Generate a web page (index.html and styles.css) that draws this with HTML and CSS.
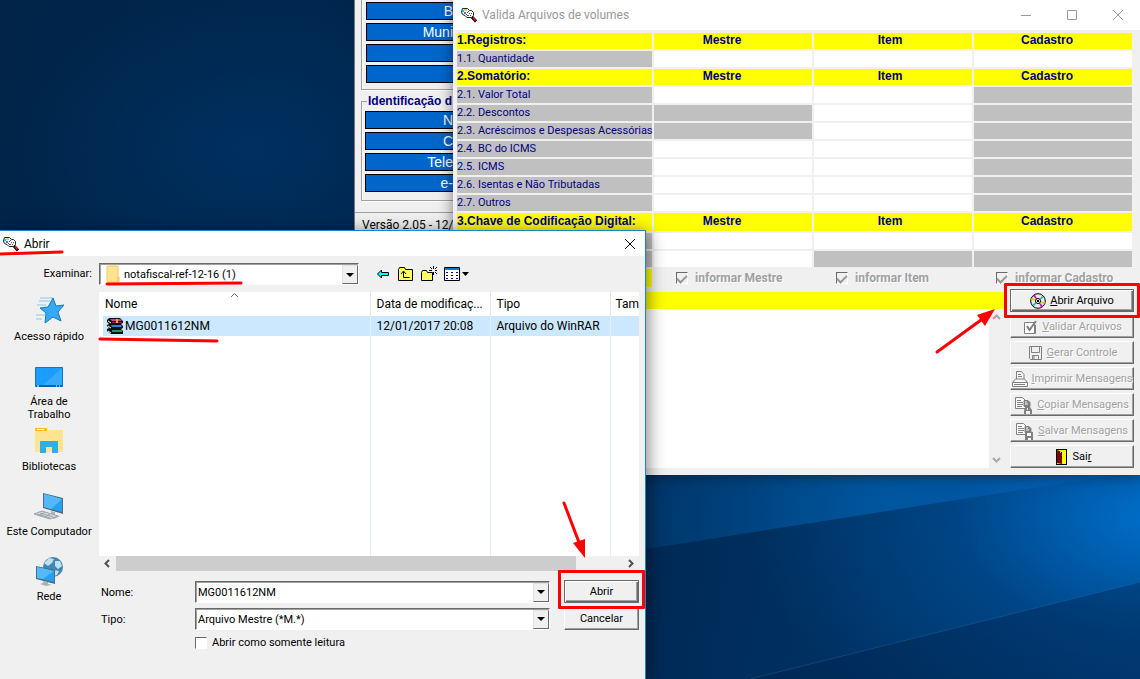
FILE: index.html
```
<!DOCTYPE html>
<html lang="pt-BR">
<head>
<meta charset="utf-8">
<title>Valida Arquivos de volumes</title>
<link rel="stylesheet" href="styles.css">
</head>
<body>
<svg class="defs" aria-hidden="true">
  <symbol id="app-icon" viewBox="0 0 16 16">
    <path d="M1.500 1.500h5l2 2h2l2 2v3l-2 2H6l-2-2-2.500-1-1-2.500z" fill="#f2f6f6" stroke="#222"/>
    <path d="M1 3h2v2H1z" fill="#0cd"/><path d="M3 2h3v2H3z" fill="#c8e060"/><path d="M3 5h2v2H3z" fill="#66d"/>
    <path d="M6 5h1v1H6zM8 6h1v1H8zM6 8h2v1H6zM9 8h1v1H9zM7 4h1v1H7zM10 6h1v1h-1zM5 7h1v1H5z" fill="#555"/>
    <path d="M11 10l4 4.500" stroke="#000" stroke-width="3"/>
    <path d="M12 10.500l2.500 3" stroke="#e22" stroke-width="1.500"/>
  </symbol>
  <symbol id="pages" viewBox="0 0 18 17">
    <path d="M.5.500h7l3 3v8H.500zM2 3.500h4M2 5.500h6M2 7.500h6M2 9.500h5" fill="#fff" stroke="#808080"/>
    <path d="M9 3.500h4l2 2v4H9z" fill="#808080" stroke="#808080"/>
    <path d="M10 5h2M10 7h3" stroke="#fff"/>
  </symbol>
</svg>
<main class="desktop">
  <svg class="wallpaper" viewBox="0 0 1140 679" preserveAspectRatio="none" aria-hidden="true">
    <defs>
      <linearGradient id="ray" x1="0" x2="1"><stop offset="0" stop-color="#0064b4" stop-opacity=".2"/><stop offset=".5" stop-color="#0064b4" stop-opacity=".65"/><stop offset="1" stop-color="#0070d0" stop-opacity=".2"/></linearGradient>
    </defs>
    <path d="M640 470h500v1L640 550z" fill="url(#ray)"/>
    <path d="M750 679l390-97v97z" fill="#002048" fill-opacity=".35"/>
    <path d="M750 679l390-97" stroke="#2a7cc0" stroke-opacity=".3"/>
  </svg>

  <section class="window back-window">
    <div class="group group-top">
      <div class="field-label">B</div>
      <div class="field-label">Muni</div>
      <div class="field-label"></div>
      <div class="field-label"></div>
    </div>
    <fieldset class="group group-id">
      <legend>Identificação d</legend>
      <div class="field-label">N</div>
      <div class="field-label">C</div>
      <div class="field-label">Tele</div>
      <div class="field-label">e-</div>
    </fieldset>
    <div class="status">Versão 2.05 - 12/0</div>
  </section>

  <section class="window valid-window">
    <header class="valid-title">
      <svg class="icon16"><use href="#app-icon"/></svg>
      <h1>Valida Arquivos de volumes</h1>
      <div class="controls">
        <button aria-label="Minimizar"><svg class="icon12" viewBox="0 0 12 12"><path d="M1 6.500h10"/></svg></button>
        <button aria-label="Maximizar"><svg class="icon12" viewBox="0 0 12 12"><path d="M1.500 1.500h9v9h-9z"/></svg></button>
        <button aria-label="Fechar"><svg class="icon12" viewBox="0 0 12 12"><path d="M1 1l10 10M11 1L1 11"/></svg></button>
      </div>
    </header>

    <table class="totals">
      <colgroup><col class="c-name"><col><col><col></colgroup>
      <tr class="head"><th>1.Registros:</th><th>Mestre</th><th>Item</th><th>Cadastro</th></tr>
      <tr><td class="off">1.1. Quantidade</td><td></td><td></td><td></td></tr>
      <tr class="head"><th>2.Somatório:</th><th>Mestre</th><th>Item</th><th>Cadastro</th></tr>
      <tr><td class="off">2.1. Valor Total</td><td></td><td></td><td class="off"></td></tr>
      <tr><td class="off">2.2. Descontos</td><td class="off"></td><td></td><td class="off"></td></tr>
      <tr><td class="off">2.3. Acréscimos e Despesas Acessórias</td><td class="off"></td><td></td><td class="off"></td></tr>
      <tr><td class="off">2.4. BC do ICMS</td><td></td><td></td><td class="off"></td></tr>
      <tr><td class="off">2.5. ICMS</td><td></td><td></td><td class="off"></td></tr>
      <tr><td class="off">2.6. Isentas e Não Tributadas</td><td></td><td></td><td class="off"></td></tr>
      <tr><td class="off">2.7. Outros</td><td></td><td></td><td class="off"></td></tr>
      <tr class="head tall"><th>3.Chave de Codificação Digital:</th><th>Mestre</th><th>Item</th><th>Cadastro</th></tr>
      <tr><td class="off"></td><td></td><td></td><td></td></tr>
      <tr><td class="off"></td><td></td><td class="off"></td><td class="off"></td></tr>
      <tr class="checks">
        <td class="mark"></td>
        <td><label><input type="checkbox" checked disabled>informar Mestre</label></td>
        <td><label><input type="checkbox" checked disabled>informar Item</label></td>
        <td><label><input type="checkbox" checked disabled>informar Cadastro</label></td>
      </tr>
    </table>

    <div class="lower">
      <div class="messages">
        <div class="bar"></div>
        <div class="log">
          <textarea aria-label="Mensagens" readonly></textarea>
          <div class="vscroll">
            <svg class="chev" viewBox="0 0 9 6"><path d="M1 5l3.500-3.500L8 5"/></svg>
            <svg class="chev" viewBox="0 0 9 6"><path d="M1 1l3.500 3.500L8 1"/></svg>
          </div>
        </div>
      </div>
      <div class="actions">
        <div class="marked">
          <button class="btn default">
            <svg class="icon16" viewBox="0 0 16 16"><circle cx="8" cy="8" r="7.300" fill="#e8e8e8" stroke="#000"/><path d="M8 8L3 3l2-1.500zM8 8l5 5-2 1.500z" fill="#d0d"/><path d="M8 8L1 7l1-2.500zM8 8l7 1-1 2.500z" fill="#cd0"/><path d="M8 8l4-5 1.500 1.500zM8 8l-4 5-1.500-1.500z" fill="#0bb"/><circle cx="8" cy="8" r="2.500" fill="#fff" stroke="#000"/><path d="M7 7h2v2H7z"/></svg>
            <span><u>A</u>brir Arquivo</span>
          </button>
          <svg class="arrow-left" viewBox="0 0 64 50"><path d="M4 46L48 14" class="shaft"/><path d="M62 3L52 20 44 9z" class="tip"/></svg>
        </div>
        <button class="btn" disabled>
          <svg class="icon16 gray" viewBox="0 0 16 16"><path d="M2.500 3.500h10v11h-10z" fill="#fff"/><path d="M4 14.500h9.500V6" fill="none"/><path d="M5 7l2.500 4L14 2" fill="none" stroke-width="2"/></svg>
          <span><u>V</u>alidar Arquivos</span>
        </button>
        <button class="btn" disabled>
          <svg class="icon16 gray" viewBox="0 0 16 16"><path d="M2.500 1.500h12v13h-11l-1-1zM4.500 1.500v6h8v-6M5.500 14.500v-4h6v4M7 11v3" fill="none"/></svg>
          <span><u>G</u>erar Controle</span>
        </button>
        <button class="btn" disabled>
          <svg class="icon16 gray" viewBox="0 0 16 16"><path d="M4.500 8V.500h5l2.500 3V8M6 3.500h3M6 5.500h4M.500 11.500l3-3.500h9l3 3.500v4H.500zM.500 11.500h15M2 13.500h11" fill="#f8f8f8"/></svg>
          <span><u>I</u>mprimir Mensagens</span>
        </button>
        <button class="btn" disabled>
          <svg class="icon18 gray" viewBox="0 0 18 17"><use href="#pages"/><path d="M9 17v-4l2-3h4l2 3v4h-2v-3h-4v3z" stroke="none"/><path d="M12 11h1v2h-1z" fill="#fff" stroke="none"/></svg>
          <span><u>C</u>opiar Mensagens</span>
        </button>
        <button class="btn" disabled>
          <svg class="icon18 gray" viewBox="0 0 18 17"><use href="#pages"/><path d="M9 9h8v8H9z" stroke="none"/><path d="M11 10h4v3h-4zM12 15h3v2h-3z" fill="#fff" stroke="none"/></svg>
          <span><u>S</u>alvar Mensagens</span>
        </button>
        <button class="btn">
          <svg class="icon16" viewBox="0 0 16 16"><path d="M3 0h11v16H3z"/><path d="M4 1h9v14H4z" fill="#ff0"/><path d="M4 1l5 2v12l-5-1z" fill="#800000"/><path d="M7 2h1v2H7z" fill="#0ff"/><path d="M8 7h1v2H8z"/></svg>
          <span>Sai<u>r</u></span>
        </button>
      </div>
    </div>
  </section>

  <section class="window dialog">
    <header class="dialog-title">
      <svg class="icon16"><use href="#app-icon"/></svg>
      <h2>Abrir</h2>
      <button aria-label="Fechar"><svg class="icon12" viewBox="0 0 12 12"><path d="M1 1l10 10M11 1L1 11"/></svg></button>
      <svg class="underline u-title" viewBox="0 0 64 6"><path d="M0 4L62 2"/></svg>
    </header>

    <div class="look">
      <label for="folder">Examinar:</label>
      <div class="combo combo-folder">
        <svg class="icon16" viewBox="0 0 16 16"><path d="M2 0h11v10l1 1v5H2z" fill="#ffe391" stroke="#f0cb62"/><path d="M12 11h2v5h-2z" fill="#f1cf68"/></svg>
        <select id="folder"><option>notafiscal-ref-12-16 (1)</option></select>
        <span class="drop"></span>
        <svg class="underline u-folder" viewBox="0 0 138 6"><path d="M2 3L136 2"/></svg>
      </div>
      <div class="tools">
        <button aria-label="Voltar"><svg class="icon16" viewBox="0 0 16 16"><path d="M2.500 8l4-4v2.500h7v3h-7V12z" fill="#0ff" stroke="#000"/></svg></button>
        <button aria-label="Um nível acima"><svg class="icon16" viewBox="0 0 16 16"><path d="M.5 14.500v-11l1-2h5l1 2h7v11z" fill="#ff6" stroke="#000"/><path d="M5.500 6v5.500h6M3 8l2.500-3L8 8" fill="none" stroke="#000"/></svg></button>
        <button aria-label="Nova pasta"><svg class="icon16" viewBox="0 0 16 16"><path d="M.5 14.500v-8l1-2h4l1 2h5v8z" fill="#ff6" stroke="#000"/><path d="M12.500 0v3M12.500 6v3M8 4.500h3M14 4.500h2M9 1l2 2M16 1l-2 2M14 6l2 2" stroke="#000"/></svg></button>
        <button aria-label="Exibir"><svg class="icon-view" viewBox="0 0 26 16"><path d="M.5 1.500h15v13H.5z" fill="#fff" stroke="#000"/><path d="M1 2h14v2H1z" fill="#0078d7"/><path d="M2 6.500h2M2 9.500h2M2 12.500h2M7 6.500h2M7 9.500h2M7 12.500h2M12 6.500h2M12 9.500h2M12 12.500h2" stroke="#008"/><path d="M18 6h7l-3.500 4z"/></svg></button>
      </div>
    </div>

    <div class="browse">
      <nav class="places">
        <button>
          <svg class="icon32" viewBox="0 0 32 32"><path d="M6 5h11M4 9h9M3 19h9M3 23h6M7 2h13" stroke="#8cc4ea"/><path d="M20 2l3 8 8-1-6 7 3 9-8-4-8 6 1-10-6-5 8-1z" fill="#36a9f4" stroke="#1479bd"/></svg>
          <span>Acesso rápido</span>
        </button>
        <button>
          <svg class="icon32" viewBox="0 0 32 32"><path d="M2.500 6.500h27v19h-27z" fill="#1a9dff" stroke="#0b76c4"/><path d="M29 7L9 25h20z" fill="#35aaff"/><path d="M3 24h26v2H3z" fill="#0766ad"/><path d="M4 25h2M23 25h1M26 25h1" stroke="#fff"/></svg>
          <span>Área de Trabalho</span>
        </button>
        <button>
          <svg class="icon32" viewBox="0 0 32 32"><path d="M2 6V2h12l2 2h14v22H2z" fill="#ffe391"/><path d="M2 2h12v3H2z" fill="#f6bf26"/><path d="M4 3h7v1H4z" fill="#fff"/><path d="M7 27V15h18v12h-6v-6h-6v6z" fill="#31afe4"/></svg>
          <span>Bibliotecas</span>
        </button>
        <button>
          <svg class="icon32" viewBox="0 0 32 32"><path d="M10 2l20 5v16l-20-6z" fill="#4e6c80"/><path d="M11 3l18 5v13l-18-5z" fill="#25a0f2"/><path d="M11 3l18 5-11 10-7-2z" fill="#54b9fa"/><path d="M18 20l4 1v3l5 1-6 3-7-3 4-2z" fill="#a8b2b8"/><path d="M9 20l16 5-8 3L1 23z" fill="#d5dade" stroke="#9aa4ab"/><path d="M7 22l13 4M4 23l13 4M12 21l-6 4M17 23l-5 3" stroke="#9aa4ab"/></svg>
          <span>Este Computador</span>
        </button>
        <button>
          <svg class="icon32" viewBox="0 0 32 32"><circle cx="20" cy="11" r="10" fill="#3d88b4"/><path d="M11 7l5-5 5 1-2 4-4 3zM22 5l5 0 2 5-4 3-3-3zM21 14l5 1-2 4-3 1z" fill="#c4dfeb"/><path d="M3 10l19 4v14L3 23z" fill="#4e6c80"/><path d="M4 11l17 4v11L4 22z" fill="#25a0f2"/><path d="M4 11l17 4-11 8-6-1z" fill="#54b9fa"/><path d="M10 25l5 1v2l4 1-6 1-6-2 3-1z" fill="#a8b2b8"/></svg>
          <span>Rede</span>
        </button>
      </nav>

      <div class="pane">
        <div class="list">
          <table class="files">
            <colgroup><col><col class="c-date"><col class="c-type"><col class="c-size"></colgroup>
            <thead><tr>
              <th>Nome<svg class="chev sort" viewBox="0 0 9 6"><path d="M1 5l3.500-3.500L8 5"/></svg></th>
              <th>Data de modificaç...</th><th>Tipo</th><th>Tam</th>
            </tr></thead>
            <tbody>
              <tr class="selected">
                <td><div class="file"><svg class="icon-rar" viewBox="0 0 17 16"><path d="M3 0h11l3 3v2l-2 1 2 2v2l-2 1 2 2v3H5l-4-3v-2l2-1-2-2V7l2-1-2-2V2z" fill="#111"/><path d="M4 1h10l2 2H6z" fill="#c04a80"/><path d="M6 4h10v1H6z" fill="#802050"/><path d="M5 7h10l1 2H6z" fill="#2a86c8"/><path d="M6 12h10v2H6z" fill="#1a9a68"/><path d="M2 3l3 2M2 8l3 2M2 13l3 2" stroke="#fff"/><path d="M10 1h2v4h-2z" fill="#d8b040"/></svg><span>MG0011612NM</span></div>
                  <svg class="underline u-file" viewBox="0 0 120 6"><path d="M1 2L118 4"/></svg></td>
                <td>12/01/2017 20:08</td><td>Arquivo do WinRAR</td><td></td>
              </tr>
              <tr class="rest"><td></td><td></td><td></td><td></td></tr>
            </tbody>
          </table>
        </div>
        <div class="hscroll">
          <svg class="side" viewBox="0 0 6 9"><path d="M5 1L1.500 4.500 5 8"/></svg>
          <div class="track"><div class="thumb"></div></div>
          <svg class="side" viewBox="0 0 6 9"><path d="M1 1l3.500 3.500L1 8"/></svg>
        </div>
        <form class="form">
          <label for="name">Nome:</label>
          <div class="combo"><input id="name" type="text" value="MG0011612NM"><span class="drop"></span></div>
          <div class="marked">
            <button type="button" class="btn default">Abrir</button>
            <svg class="arrow-down" viewBox="0 0 30 60"><path d="M5 4L21 46" class="shaft"/><path d="M26 59L14 44 26 40z" class="tip"/></svg>
          </div>
          <label for="type">Tipo:</label>
          <div class="combo"><select id="type"><option>Arquivo Mestre (*M.*)</option></select><span class="drop"></span></div>
          <button type="button" class="btn">Cancelar</button>
          <label class="readonly"><input type="checkbox">Abrir como somente leitura</label>
        </form>
      </div>
    </div>
  </section>
</main>
</body>
</html>
```
FILE: styles.css
```
* { box-sizing: border-box; }

body {
  margin: 0;
  font: 11px/14px Roboto, "Liberation Sans", sans-serif;
  color: #000;
}

h1, h2 { margin: 0; font-weight: normal; }
button { font: inherit; color: inherit; }
svg { display: block; flex: none; overflow: visible; }
.defs { position: absolute; width: 0; height: 0; }

.desktop {
  position: relative;
  min-height: 100vh;
  overflow: hidden;
  background:
    radial-gradient(ellipse 420px 240px at 102% 76%, #0070cc, rgba(0, 84, 160, .5) 50%, transparent),
    radial-gradient(ellipse 240px 160px at 22% 22%, #00305f, transparent),
    linear-gradient(100deg, #012448 0%, #00264e 25%, #001f42 45%, #002a56 60%, #003c74 100%);
}
.wallpaper { position: absolute; inset: 0; width: 100%; height: 100%; }

.window { position: absolute; background: #f0f0f0; }

.icon12 { width: 12px; height: 12px; fill: none; stroke: currentColor; }
.icon16 { width: 16px; height: 16px; }
.icon18 { width: 18px; height: 17px; }
.icon32 { width: 32px; height: 32px; }
.icon-rar { width: 17px; height: 16px; }
.icon-view { width: 26px; height: 16px; }
.chev { width: 9px; height: 6px; fill: none; stroke: #a8a8a8; stroke-width: 2; }
.side { width: 6px; height: 9px; fill: none; stroke: #505050; stroke-width: 2; }

/* Registration window behind the others */
.back-window {
  left: 354px;
  top: 0;
  width: 110px;
  height: 240px;
  padding-left: 6px;
  border-left: 1px solid #777;
}
.group {
  display: flex;
  flex-direction: column;
  gap: 3px;
  margin: 0;
  border: 1px solid #a0a0a0;
  box-shadow: 1px 1px 0 #fff, inset 1px 0 0 #fff;
}
.group-top { height: 90px; padding: 2px 0 0 4px; border-top: 0; }
.group-id { height: 107px; margin-top: 4px; padding: 2px 0 0 3px; }
.group-id legend {
  padding: 0 1px;
  margin-left: 2px;
  font: bold 12px/15px "Liberation Sans", Arial, sans-serif;
  color: #000080;
  white-space: nowrap;
}
.field-label {
  height: 18px;
  padding-right: 9px;
  border: 1px solid #000;
  background: #0066cc;
  color: #fff;
  font: 14px/17px "Liberation Sans", Arial, sans-serif;
  text-align: right;
}
.status {
  margin: 11px 0 0 -6px;
  height: 28px;
  padding: 3px 7px;
  border-top: 1px solid #a0a0a0;
  font-size: 12px;
  line-height: 18px;
  white-space: nowrap;
}

/* Validation window */
.valid-window {
  left: 453px;
  right: 0;
  top: 0;
  padding-bottom: 7px;
  box-shadow: 0 0 14px rgba(0, 0, 0, .5);
}
.valid-title {
  display: flex;
  align-items: center;
  height: 30px;
  padding: 0 8px;
  gap: 5px;
  background: #fff;
  color: #999;
}
.valid-title h1 { flex: 1; font-size: 12px; line-height: 18px; }
.controls { display: flex; gap: 34px; padding-right: 8px; }
.controls button, .dialog-title button, .tools button {
  padding: 0;
  border: 0;
  background: none;
}

.totals {
  table-layout: fixed;
  width: calc(100% - 8px);
  margin: 1px 6px 0 2px;
  border-collapse: separate;
  border-spacing: 2px;
  color: #000080;
}
.c-name { width: 195px; }
.totals th, .totals td {
  height: 16px;
  padding: 0;
  line-height: 16px;
  text-align: left;
  vertical-align: top;
  white-space: nowrap;
}
.totals td { background: #fff; }
.totals td.off { background: #c0c0c0; }
.totals th {
  background: #ff0;
  font-family: "Liberation Sans", Arial, sans-serif;
  font-size: 12px;
  line-height: 14px;
}
.totals th + th { padding-right: 22px; text-align: center; }
.totals th:nth-child(3) { padding-right: 6px; }
.totals th:nth-child(4) { padding-right: 12px; }
.totals .tall th { height: 18px; line-height: 16px; }
.totals .checks td { height: 18px; padding-left: 22px; background: none; }
.totals .checks td.mark { background: #ff0; }
.checks label {
  display: flex;
  align-items: center;
  gap: 7px;
  height: 18px;
  font-weight: bold;
  font-size: 12px;
  color: #a0a0a0;
  text-shadow: 1px 1px 0 #fff;
}

input[type="checkbox"] {
  appearance: none;
  display: grid;
  place-items: center;
  flex: none;
  width: 12px;
  height: 12px;
  margin: 0;
  border: 1px solid;
  border-color: #696969 #fff #fff #696969;
  background: #fff;
}
input[type="checkbox"]:disabled { background: #f0f0f0; }
input[type="checkbox"]:checked::before {
  content: "";
  width: 8px;
  height: 4px;
  border: solid #999;
  border-width: 0 0 2px 2px;
  transform: rotate(-45deg);
}

.lower { display: flex; gap: 6px; padding-right: 6px; }
.messages { flex: 1; display: flex; flex-direction: column; padding-top: 3px; }
.bar { height: 17px; background: #ff0; }
.log { flex: 1; display: flex; }
.log textarea {
  flex: 1;
  min-width: 0;
  padding: 2px;
  border: 0;
  background: #fff;
  resize: none;
}
.vscroll {
  display: flex;
  flex-direction: column;
  justify-content: space-between;
  padding: 5px 3px;
}
.actions { display: flex; flex-direction: column; gap: 3px; width: 124px; }

.btn {
  display: flex;
  align-items: center;
  justify-content: center;
  gap: 4px;
  width: 100%;
  height: 23px;
  padding: 1px 0 0;
  border: 1px solid;
  border-color: #fff #696969 #696969 #fff;
  box-shadow: inset -1px -1px 0 #a0a0a0;
  background: #f0f0f0;
  white-space: nowrap;
}
.btn.default {
  border-color: #696969;
  box-shadow: inset 1px 1px 0 #fff, inset -1px -1px 0 #696969, inset -2px -2px 0 #a0a0a0;
}
.btn:disabled { color: #a0a0a0; text-shadow: 1px 1px 0 #fff; }
.gray { fill: #808080; stroke: #808080; }

/* Hand-drawn highlights */
.marked { position: relative; z-index: 1; }
.marked::after {
  content: "";
  position: absolute;
  inset: -6px;
  border: 3px solid #f00;
  border-radius: 1px;
  pointer-events: none;
}
.form .marked::after { top: -10px; }
.shaft { stroke: #f00; stroke-width: 3; stroke-linecap: round; }
.tip { fill: #f00; }
.arrow-left { position: absolute; right: 137px; top: 17px; width: 64px; height: 50px; }
.arrow-down { position: absolute; left: -5px; bottom: 44px; width: 30px; height: 60px; }
.underline {
  position: absolute;
  height: 6px;
  fill: none;
  stroke: #f00;
  stroke-width: 3;
  stroke-linecap: round;
}

/* File dialog */
.dialog {
  left: 0;
  top: 230px;
  bottom: 0;
  width: min(646px, 100%);
  min-height: 449px;
  border: solid #1883d7;
  border-width: 1px 1px 0 0;
  box-shadow: 2px 2px 16px rgba(0, 0, 0, .5);
}
.dialog-title {
  position: relative;
  display: flex;
  align-items: center;
  gap: 5px;
  height: 25px;
  padding: 0 9px 0 3px;
  background: #fff;
}
.dialog-title h2 { flex: 1; font-size: 12px; line-height: 18px; }
.u-title { left: 0; top: 19px; width: 64px; }

.look { display: flex; align-items: center; height: 36px; }
.look > label { width: 99px; padding-right: 7px; text-align: right; }
.combo {
  position: relative;
  display: flex;
  align-items: center;
  height: 22px;
  border: 1px solid;
  border-color: #696969 #fff #fff #696969;
  box-shadow: inset 1px 1px 0 #a0a0a0;
  background: #fff;
}
.combo-folder { width: 260px; padding-left: 5px; }
.combo select, .combo input {
  appearance: none;
  flex: 1;
  min-width: 0;
  padding: 2px 2px 0;
  border: 0;
  outline: 0;
  background: transparent;
  font: inherit;
  color: #000;
}
.combo-folder select { padding-left: 3px; }
.drop {
  display: grid;
  place-items: center;
  align-self: stretch;
  width: 16px;
  margin: 1px 0 0;
  border: 1px solid;
  border-color: #e3e3e3 #696969 #696969 #e3e3e3;
  background: #f0f0f0;
  pointer-events: none;
}
.drop::before {
  content: "";
  border: 4px solid transparent;
  border-top-color: #000;
  border-bottom: 0;
}
.u-folder { left: 5px; top: 17px; width: 138px; }
.tools { display: flex; gap: 7px; padding-left: 16px; }

.browse { display: flex; }
.places {
  display: flex;
  flex-direction: column;
  width: 98px;
  margin-right: 1px;
  padding-top: 4px;
}
.places button {
  display: flex;
  flex-direction: column;
  align-items: center;
  gap: 2px;
  height: 65px;
  padding: 0 18px;
  border: 0;
  background: none;
  line-height: 13px;
}
.places span { white-space: nowrap; }
.places button:nth-child(2) span { white-space: normal; }

.pane { flex: 1; min-width: 0; padding-right: 6px; }
.list { height: 264px; overflow: hidden; background: #fff; }
.files {
  table-layout: fixed;
  width: 100%;
  height: 264px;
  border-collapse: collapse;
  font-size: 12px;
  line-height: 18px;
}
.c-date, .c-type { width: 120px; }
.c-size { width: 29px; }
.files th, .files td {
  padding: 0 0 0 6px;
  font-weight: normal;
  text-align: left;
  white-space: nowrap;
}
.files th { position: relative; height: 24px; }
.files th:last-child { padding-left: 5px; }
.files th + th { border-left: 1px solid #e5e5e5; }
.files td + td { border-left: 1px solid #e4eff9; }
.selected { height: 20px; background: linear-gradient(90deg, #fff 4px, #cce8ff 4px); }
.file { display: flex; align-items: center; gap: 2px; padding-left: 1px; }
.sort { position: absolute; left: 50%; top: 0; margin-left: -4px; stroke: #707070; stroke-width: 1; }
.u-file { left: 99px; top: 106px; width: 120px; }

.hscroll {
  display: flex;
  align-items: center;
  gap: 6px;
  height: 15px;
  padding: 0 5px;
}
.track { flex: 1; align-self: stretch; }
.thumb { width: 91%; height: 100%; background: #cdcdcd; }

.form {
  display: grid;
  grid-template-columns: 94px 1fr 75px;
  row-gap: 4px;
  align-items: center;
  padding-top: 9px;
}
.form > label { padding: 2px 0 0 2px; }
.form .combo { margin: 0 14px 0 2px; }
.form .readonly {
  grid-column: 2 / 4;
  display: flex;
  align-items: center;
  gap: 5px;
}
```
